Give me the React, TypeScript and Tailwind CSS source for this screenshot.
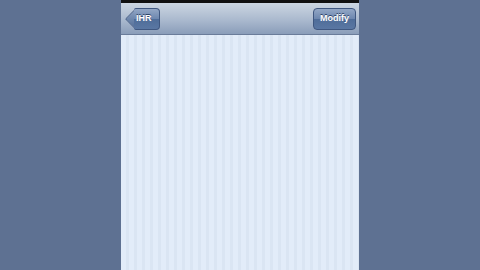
import React from 'react';

const BackButton: React.FC<{ label: string }> = ({ label }) => (
  <div className="relative flex items-center h-[22px] ml-[1px]">
    {/* arrow tip */}
    <div className="w-[16px] h-[16px] rotate-45 rounded-[2px] bg-[linear-gradient(135deg,#8fa4c4,#4d6994)] border-l border-b border-[#3f5780] absolute left-[4px] top-[3px]" />
    <div className="relative ml-[10px] h-[22px] pl-[2px] pr-[7px] flex items-center rounded-r-[4px] rounded-l-[2px] bg-[linear-gradient(#93a7c6,#6c86ae_50%,#4f6d99_51%,#5a77a3)] border border-l-0 border-[#3f5780]">
      <span className="text-[9px] font-bold text-white [text-shadow:0_-1px_0_#2f4468]">{label}</span>
    </div>
  </div>
);

export default function App() {
  return (
    <div className="w-[480px] h-[270px] bg-[#5e7192] flex justify-center overflow-hidden font-['Liberation_Sans',sans-serif]">
      <div className="w-[238px] h-full flex flex-col">
        <div className="h-[3px] bg-[#111]" />
        <div className="h-[32px] flex items-center justify-between px-[2px] bg-[linear-gradient(#ccd6e2,#aab9ce_55%,#8a9db9)] border-b border-[#6a7c9a]">
          <BackButton label="IHR" />
          <div className="h-[22px] px-[6px] ml-[-1px] mr-[1px] flex items-center rounded-[4px] bg-[linear-gradient(#93a7c6,#6c86ae_50%,#4f6d99_51%,#5a77a3)] border border-[#3f5780]">
            <span className="text-[9px] font-bold text-white [text-shadow:0_-1px_0_#2f4468]">Modify</span>
          </div>
        </div>
        <div className="flex-1 bg-[repeating-linear-gradient(90deg,#e2ecf9_0px,#e2ecf9_5px,#dae5f3_5px,#dae5f3_8px)]" />
      </div>
    </div>
  );
}
